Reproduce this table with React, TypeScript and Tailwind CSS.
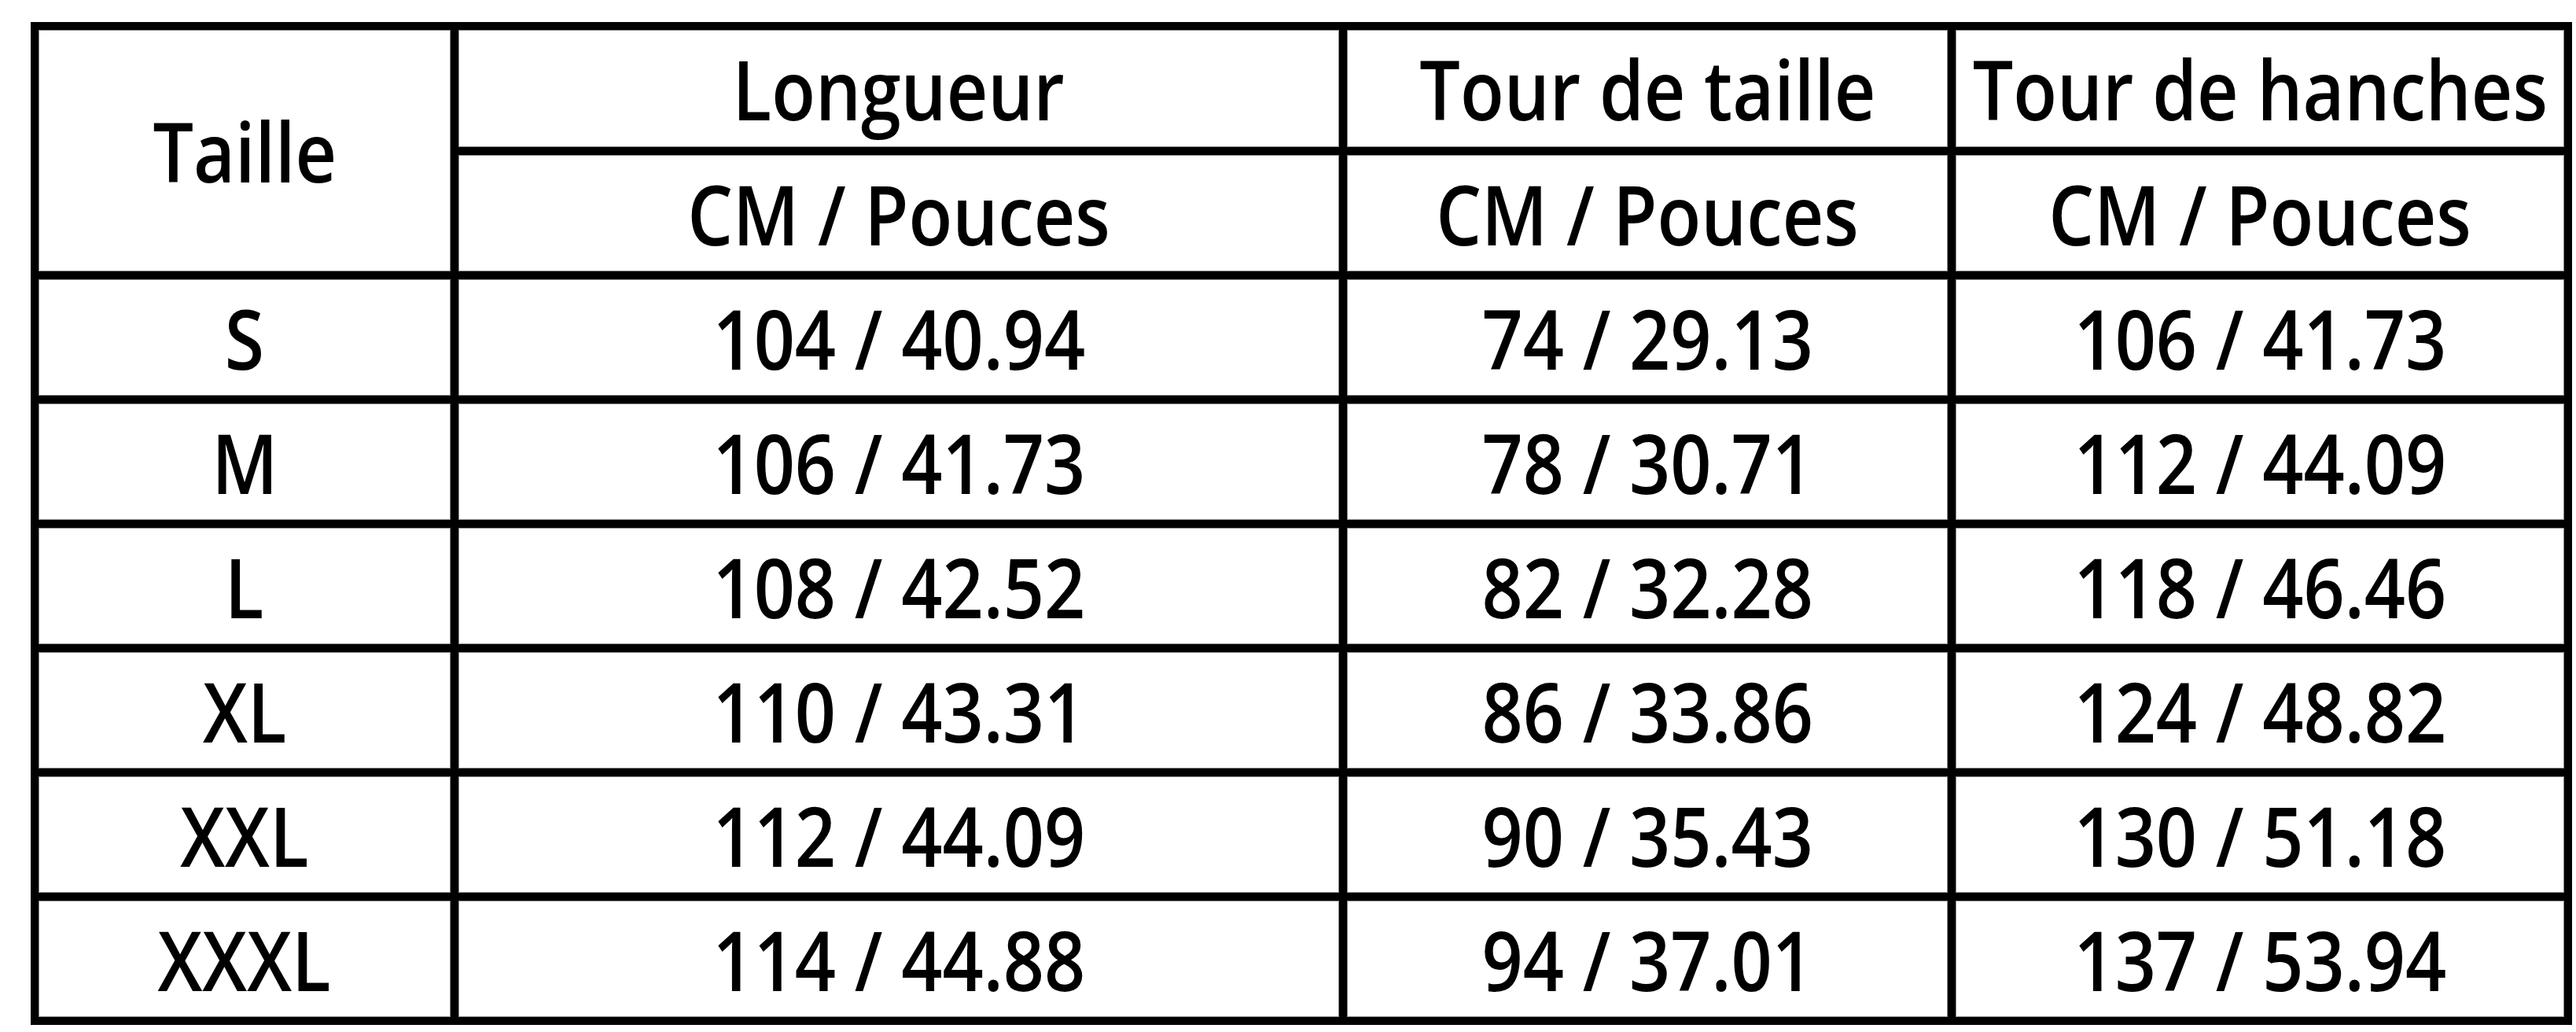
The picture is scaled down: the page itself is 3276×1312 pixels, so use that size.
const headers = ['Longueur', 'Tour de taille', 'Tour de hanches']

const rows = [
  { size: 'S', values: ['104 / 40.94', '74 / 29.13', '106 / 41.73'] },
  { size: 'M', values: ['106 / 41.73', '78 / 30.71', '112 / 44.09'] },
  { size: 'L', values: ['108 / 42.52', '82 / 32.28', '118 / 46.46'] },
  { size: 'XL', values: ['110 / 43.31', '86 / 33.86', '124 / 48.82'] },
  { size: 'XXL', values: ['112 / 44.09', '90 / 35.43', '130 / 51.18'] },
  { size: 'XXXL', values: ['114 / 44.88', '94 / 37.01', '137 / 53.94'] },
]

function Cell({ children, className = '' }: { children: React.ReactNode; className?: string }) {
  return (
    <div className={`flex items-center justify-center bg-white border border-[#8a8a8a] ${className}`}>
      <span className="inline-block scale-x-[0.87] whitespace-nowrap">{children}</span>
    </div>
  )
}

export default function App() {
  return (
    <div className="min-h-screen bg-white pl-[39px] pt-[28px] font-['Open_Sans','Noto_Sans',sans-serif] text-[105px] font-semibold leading-none text-black">
      <div className="grid w-fit grid-cols-[524px_1120px_764px_774px] grid-rows-[149px_repeat(7,148px)] gap-[10px] bg-black p-[10px]">
        <Cell className="row-span-2">Taille</Cell>
        {headers.map((h) => (
          <Cell key={h}>{h}</Cell>
        ))}
        {headers.map((h) => (
          <Cell key={h + '-unit'}>CM / Pouces</Cell>
        ))}
        {rows.map((r) => (
          <>
            <Cell key={r.size}>{r.size}</Cell>
            {r.values.map((v, i) => (
              <Cell key={r.size + i}>{v}</Cell>
            ))}
          </>
        ))}
      </div>
    </div>
  )
}
